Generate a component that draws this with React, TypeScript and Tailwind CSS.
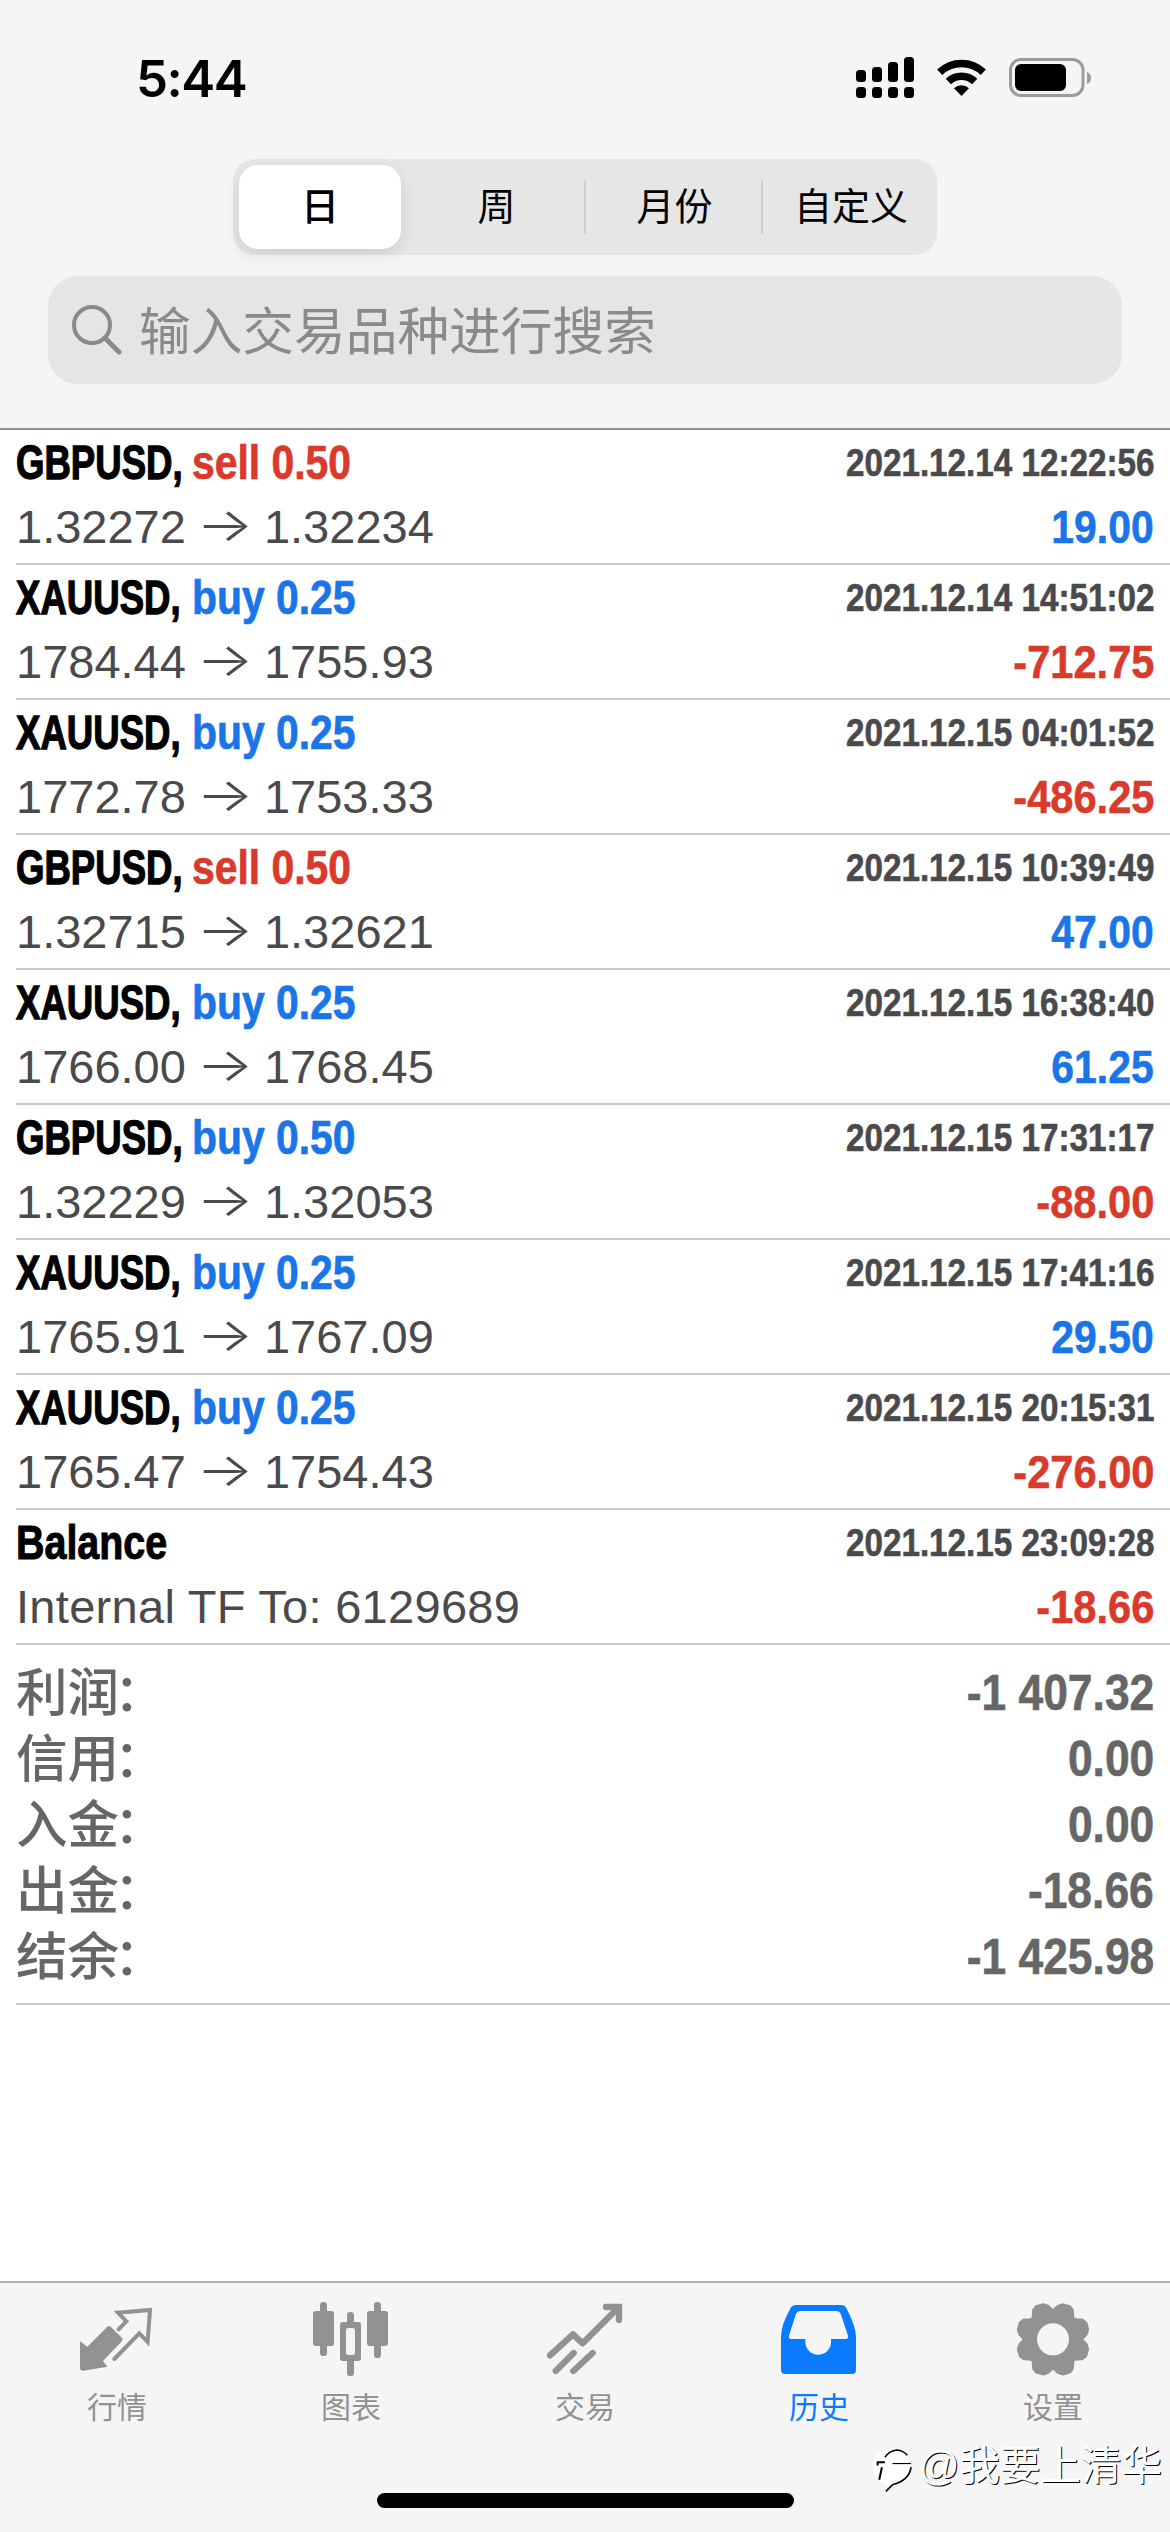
import React from "react";
import clsx from "clsx";

type Deal = {
  symbol: string;
  side: "buy" | "sell";
  volume: string;
  open: string;
  close: string;
  time: string;
  profit: string;
};

const deals: Deal[] = [
  { symbol: "GBPUSD", side: "sell", volume: "0.50", open: "1.32272", close: "1.32234", time: "2021.12.14 12:22:56", profit: "19.00" },
  { symbol: "XAUUSD", side: "buy", volume: "0.25", open: "1784.44", close: "1755.93", time: "2021.12.14 14:51:02", profit: "-712.75" },
  { symbol: "XAUUSD", side: "buy", volume: "0.25", open: "1772.78", close: "1753.33", time: "2021.12.15 04:01:52", profit: "-486.25" },
  { symbol: "GBPUSD", side: "sell", volume: "0.50", open: "1.32715", close: "1.32621", time: "2021.12.15 10:39:49", profit: "47.00" },
  { symbol: "XAUUSD", side: "buy", volume: "0.25", open: "1766.00", close: "1768.45", time: "2021.12.15 16:38:40", profit: "61.25" },
  { symbol: "GBPUSD", side: "buy", volume: "0.50", open: "1.32229", close: "1.32053", time: "2021.12.15 17:31:17", profit: "-88.00" },
  { symbol: "XAUUSD", side: "buy", volume: "0.25", open: "1765.91", close: "1767.09", time: "2021.12.15 17:41:16", profit: "29.50" },
  { symbol: "XAUUSD", side: "buy", volume: "0.25", open: "1765.47", close: "1754.43", time: "2021.12.15 20:15:31", profit: "-276.00" },
];

const summary = [
  { label: "利润", value: "-1 407.32" },
  { label: "信用", value: "0.00" },
  { label: "入金", value: "0.00" },
  { label: "出金", value: "-18.66" },
  { label: "结余", value: "-1 425.98" },
];

function StatusBar() {
  return (
    <div className="flex h-[159px] items-start justify-between pl-[136px] pr-[79px]">
      <div className="mt-[48px] font-['Inter'] text-[51px] leading-[62px] font-semibold tracking-[-1.5px] text-black">
        5:44
      </div>
      <svg className="mt-[54px] h-[46px] w-[236px]" viewBox="855 54 236 46">
        {[70, 67, 62, 57].map((top, i) => (
          <g key={top}>
            <rect x={856 + i * 16} y={top} width="10" height={82 - top} rx="3.5" />
            <rect x={856 + i * 16} y="87" width="10" height="11" rx="3.5" />
          </g>
        ))}
        <path d="M961.500 96l-7.500-7.800a11 11 0 0 1 15 0z" />
        <path d="M948.300 81.500a19 19 0 0 1 26.400 0M939.700 72.300a31.500 31.500 0 0 1 43.600 0" fill="none" stroke="#000" strokeWidth="7.500" />
        <rect x="1010.500" y="59.500" width="72.500" height="36" rx="10.500" fill="none" stroke="#9b9b9b" strokeWidth="3" />
        <rect x="1015" y="64" width="51" height="27" rx="6" />
        <path d="M1087 72q4 1.500 4 6t-4 6z" fill="#9b9b9b" />
      </svg>
    </div>
  );
}

function PeriodTabs() {
  return (
    <div className="mx-auto flex h-[96px] w-[704px] items-center rounded-[22px] bg-[#e6e6e6] pl-[6px] text-[38px] text-black">
      <div className="flex h-[84px] w-[162px] items-center justify-center rounded-[19px] bg-white font-medium shadow-[0_6px_16px_rgba(0,0,0,0.1)]">
        日
      </div>
      <div className="w-[183px] pl-[8px] text-center">周</div>
      <div className="h-[54px] w-[2px] bg-[#cfcfcf]" />
      <div className="w-[175px] pl-[2px] text-center">月份</div>
      <div className="h-[54px] w-[2px] bg-[#cfcfcf]" />
      <div className="w-[174px] pl-[2px] text-center">自定义</div>
    </div>
  );
}

function SearchField() {
  return (
    <div className="mx-[48px] mt-[21px] flex h-[108px] items-center rounded-[30px] bg-[#e5e5e7] pl-[24px] text-[#8a8a8d]">
      <svg className="h-[50px] w-[50px]" viewBox="0 0 50 50" fill="none" stroke="currentColor">
        <circle cx="20" cy="20" r="18" strokeWidth="4" />
        <path d="M33 33l14 14" strokeWidth="5" strokeLinecap="round" />
      </svg>
      <div className="mt-[4px] ml-[17px] text-[51.700px] leading-[70px]">输入交易品种进行搜索</div>
    </div>
  );
}

function Row({ children }: { children: React.ReactNode }) {
  return (
    <div className="ml-[16px] h-[135px] border-b-2 border-[#c9c9cb] pr-[16px]">{children}</div>
  );
}

function Time({ children }: { children: string }) {
  return (
    <span className="origin-right scale-x-[0.863] text-[38.500px] leading-[56px] font-bold whitespace-nowrap text-[#4a4a4d] [-webkit-text-stroke:0.6px]">
      {children}
    </span>
  );
}

function Profit({ value }: { value: string }) {
  return (
    <span
      className={clsx(
        "origin-right text-[47px] leading-[62px] font-bold [-webkit-text-stroke:0.6px]",
        value.startsWith("-")
          ? "scale-x-[0.885] text-[#d93a2b]"
          : "scale-x-[0.87] text-[#1a75e8]",
      )}
    >
      {value}
    </span>
  );
}

function DealRow({ deal }: { deal: Deal }) {
  return (
    <Row>
      <div className="flex h-[66px] items-center justify-between">
        <div className="flex text-[47.500px] leading-[62px] font-bold">
          <span className="w-[176px] origin-left scale-x-[0.77] whitespace-nowrap text-black [-webkit-text-stroke:1.3px]">
            {deal.symbol},
          </span>
          <span
            className={clsx(
              "origin-left scale-x-[0.86] whitespace-nowrap [-webkit-text-stroke:0.7px]",
              deal.side === "buy" ? "text-[#1a75e8]" : "text-[#d93a2b]",
            )}
          >
            {deal.side} {deal.volume}
          </span>
        </div>
        <Time>{deal.time}</Time>
      </div>
      <div className="flex h-[62px] items-center justify-between">
        <div className="flex text-[47px] leading-[62px] text-[#4a4a4d]">
          <span>{deal.open}</span>
          <span className="w-[78px] -translate-y-[3px] scale-x-[1.28] text-center font-['Inter'] font-light">
            →
          </span>
          <span>{deal.close}</span>
        </div>
        <Profit value={deal.profit} />
      </div>
    </Row>
  );
}

function BalanceRow() {
  return (
    <Row>
      <div className="flex h-[66px] items-center justify-between">
        <span className="origin-left scale-x-[0.83] text-[47.500px] leading-[62px] font-bold text-black [-webkit-text-stroke:1px]">
          Balance
        </span>
        <Time>2021.12.15 23:09:28</Time>
      </div>
      <div className="flex h-[62px] items-center justify-between">
        <span className="text-[47px] leading-[62px] tracking-[0.3px] text-[#4a4a4d]">
          Internal TF To: 6129689
        </span>
        <Profit value="-18.66" />
      </div>
    </Row>
  );
}

function Summary() {
  return (
    <div className="ml-[16px] h-[360px] border-b-2 border-[#c9c9cb] pt-[15px] pr-[16px] text-[#666]">
      {summary.map((item) => (
        <div key={item.label} className="flex h-[66px] items-center justify-between">
          <span className="text-[51.500px] leading-[66px] font-medium">
            {item.label}
            <span className="-ml-[5px]">：</span>
          </span>
          <span className="origin-right scale-x-[0.888] text-[50px] leading-[66px] font-bold [-webkit-text-stroke:0.6px]">
            {item.value}
          </span>
        </div>
      ))}
    </div>
  );
}

// one quarter of the gear outline, turned four times around its centre
const gearQuarter = [
  [0, -88], [14, -101], [29, -106], [51, -100], [60, -88], [61, -70],
  [62, -63], [71, -61], [88, -60], [100, -51], [106, -30], [101, -14],
];

const gearPoints = [0, 1, 2, 3]
  .flatMap((turn) =>
    gearQuarter.map(([x, y]) => {
      for (let i = 0; i < turn; i++) [x, y] = [-y, x];
      return `${x},${y}`;
    }),
  )
  .join(" ");

const tabs = [
  {
    label: "行情",
    viewBox: "234 90 234 234",
    icon: (
      <>
        <path
          d="M240 214l22 16 60-60q6-4 11 1l33 33q4 5 0 9l-57 60 13 17-72 12q-10 0-10-8z"
          fill="currentColor"
        />
        <path d="M356 178l23-24-25-26 96-8-7 96-25-26-75 77" fill="none" stroke="currentColor" strokeWidth="12" strokeLinecap="round" />
      </>
    ),
  },
  {
    label: "图表",
    viewBox: "936 90 234 234",
    icon: (
      <g fill="currentColor">
        <rect x="960" y="96" width="21" height="162" rx="10" />
        <rect x="939" y="123" width="63" height="105" rx="8" />
        <rect x="1122" y="96" width="21" height="168" rx="10" />
        <rect x="1101" y="123" width="63" height="105" rx="8" />
        <rect x="1041" y="126" width="21" height="40" rx="10" />
        <rect x="1041" y="262" width="21" height="56" rx="10" />
        <path
          fillRule="evenodd"
          d="M1028 156h47q8 0 8 8v101q0 8-8 8h-47q-8 0-8-8V164q0-8 8-8zM1046 174q-8 0-8 8v65q0 8 8 8h11q8 0 8-8v-65q0-8-8-8z"
        />
      </g>
    ),
  },
  {
    label: "交易",
    viewBox: "318 90 234 234",
    icon: (
      <g fill="none" stroke="currentColor" strokeWidth="19" strokeLinecap="round">
        <path d="M330 256l69-63 29 27L536 112" strokeLinejoin="round" />
        <path d="M498 111h39v39" />
        <path d="M347 303l54-54M400 303l58-54" />
      </g>
    ),
  },
  {
    label: "历史",
    viewBox: "1020 90 234 234",
    active: true,
    icon: (
      <path
        fill="currentColor"
        fillRule="evenodd"
        d="M1068 105H1204Q1214 105 1219 114Q1248 170 1248 200V300Q1248 312 1236 312H1036Q1023 312 1023 300V200Q1023 165 1052 114Q1057 105 1068 105ZM1080 123Q1071 123 1068 131L1047 197Q1045 207 1055 207H1096V216A38.500 38.500 0 0 0 1173 216V207H1215Q1226 207 1224 197L1202 131Q1199 123 1190 123Z"
      />
    ),
  },
  {
    label: "设置",
    viewBox: "-117 -118 234 234",
    icon: (
      <>
        <polygon points={gearPoints} fill="currentColor" stroke="currentColor" strokeWidth="5" strokeLinejoin="round" />
        <circle r="48" fill="#f5f5f5" />
      </>
    ),
  },
];

function TabBar() {
  return (
    <div className="flex h-[251px] flex-col border-t-2 border-[#b2b2b2] bg-[#f5f5f5]">
      <div className="grid grid-cols-5">
        {tabs.map((tab) => (
          <div
            key={tab.label}
            className={clsx(
              "flex flex-col items-center pt-[17px]",
              tab.active ? "text-[#0a7aff]" : "text-[#929292]",
            )}
          >
            <svg className="h-[78px] w-[78px]" viewBox={tab.viewBox}>
              {tab.icon}
            </svg>
            <span className="mt-[8px] text-[30px] leading-[44px]">{tab.label}</span>
          </div>
        ))}
      </div>
      <div className="mx-auto mt-[63px] h-[15px] w-[417px] rounded-full bg-black" />
    </div>
  );
}

function Watermark() {
  return (
    <div className="absolute right-[8px] bottom-[36px] flex items-center">
      <svg className="mt-[6px] mr-[4px] h-[52px] w-[43px]" viewBox="30 40 130 155" fill="none" stroke="#000">
        <ellipse cx="93" cy="112" rx="58" ry="56" fill="#fff" stroke="none" />
        <path d="M50 107v-10h22M63 112l-8 38" strokeWidth="6" />
        <path d="M72 82q14-20 36-22 20 2 32 16" strokeWidth="4.500" />
        <path d="M95 101h56" strokeWidth="3.500" />
        <path d="M151 112q-5 40-56 53l-20 20" strokeWidth="5" />
      </svg>
      <span className="text-[40.500px] leading-[60px] text-white [text-shadow:1px_1px_0_#000]">@我要上清华</span>
    </div>
  );
}

export default function App() {
  return (
    <div className="relative flex h-[2532px] w-[1170px] flex-col overflow-hidden bg-white font-['Liberation_Sans','Noto_Sans_CJK_SC',sans-serif]">
      <div className="h-[430px] shrink-0 border-b-2 border-[#8f8f8f] bg-[#f5f5f5]">
        <StatusBar />
        <PeriodTabs />
        <SearchField />
      </div>
      <div className="flex-1">
        {deals.map((deal) => (
          <DealRow key={deal.time} deal={deal} />
        ))}
        <BalanceRow />
        <Summary />
      </div>
      <TabBar />
      <Watermark />
    </div>
  );
}
